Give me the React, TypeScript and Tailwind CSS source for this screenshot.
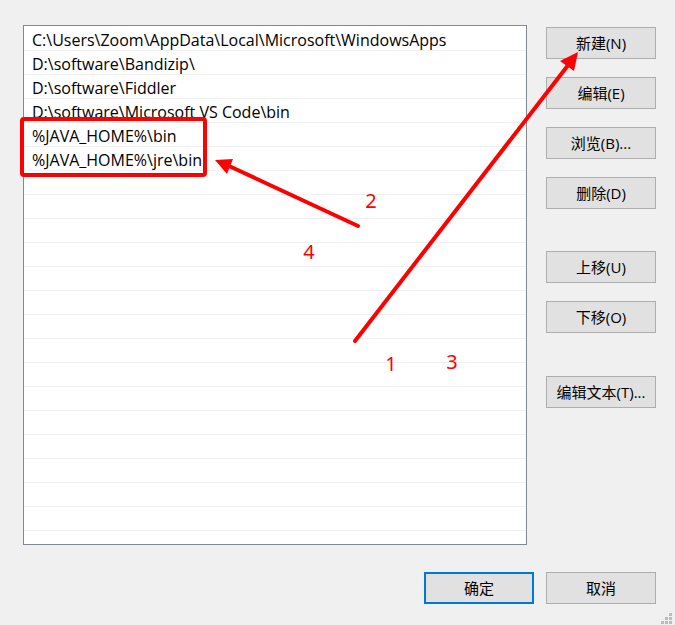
import React from 'react'

const paths = [
  'C:\\Users\\Zoom\\AppData\\Local\\Microsoft\\WindowsApps',
  'D:\\software\\Bandizip\\',
  'D:\\software\\Fiddler',
  'D:\\software\\Microsoft VS Code\\bin',
  '%JAVA_HOME%\\bin',
  '%JAVA_HOME%\\jre\\bin',
]

const font = { fontFamily: '"Open Sans", "Noto Sans CJK SC", sans-serif' }

function Button({ label, primary = false, className = '' }: { label: string; primary?: boolean; className?: string }) {
  return (
    <div
      className={`flex h-[32px] w-[110px] items-center justify-center bg-[#e1e1e1] text-[15px] text-black ${
        primary ? 'border-2 border-[#0078d7]' : 'border border-[#adadad]'
      } ${className}`}
    >
      {label}
    </div>
  )
}

export default function App() {
  const rows = Array.from({ length: 22 }, (_, i) => paths[i] || '')

  return (
    <div className="relative h-[625px] w-[675px] overflow-hidden bg-[#f0f0f0]" style={font}>
      <div className="flex pl-[23px] pt-[25px]">
        {/* 路径列表 */}
        <div className="h-[520px] w-[504px] overflow-hidden border border-[#828790] bg-white pt-[1px]">
          {rows.map((p, i) => (
            <div
              key={i}
              className="flex h-[24px] items-center border-b border-[#f0f0f0] pt-[2px] pl-[8px] text-[16px] leading-none whitespace-nowrap text-black"
            >
              {p}
            </div>
          ))}
        </div>

        {/* 右侧按钮 */}
        <div className="ml-[19px] flex flex-col pt-[2px]">
          <Button label="新建(N)" />
          <Button label="编辑(E)" className="mt-[18px]" />
          <Button label="浏览(B)..." className="mt-[18px]" />
          <Button label="删除(D)" className="mt-[18px]" />
          <Button label="上移(U)" className="mt-[42px]" />
          <Button label="下移(O)" className="mt-[18px]" />
          <Button label="编辑文本(T)..." className="mt-[43px]" />
        </div>
      </div>

      {/* 底部按钮 */}
      <div className="mt-[27px] flex justify-end gap-[12px] pr-[19px]">
        <Button label="确定" primary />
        <Button label="取消" />
      </div>

      {/* 调整大小手柄 */}
      <div className="absolute right-[3px] bottom-[1px] grid grid-cols-3 gap-[1px]">
        <span className="h-[3px] w-[3px]" />
        <span className="h-[3px] w-[3px]" />
        <span className="h-[3px] w-[3px] bg-[#bcbcbc]" />
        <span className="h-[3px] w-[3px]" />
        <span className="h-[3px] w-[3px] bg-[#bcbcbc]" />
        <span className="h-[3px] w-[3px] bg-[#bcbcbc]" />
        <span className="h-[3px] w-[3px] bg-[#bcbcbc]" />
        <span className="h-[3px] w-[3px] bg-[#bcbcbc]" />
        <span className="h-[3px] w-[3px] bg-[#bcbcbc]" />
      </div>

      {/* 标注 */}
      <svg className="pointer-events-none absolute inset-0" width="675" height="625" viewBox="0 0 675 625">
        <rect x="22" y="119" width="183" height="56" rx="2" fill="none" stroke="#ff0000" strokeWidth="4" />
        <line x1="355" y1="341" x2="569" y2="64" stroke="#ff0000" strokeWidth="4" strokeLinecap="round" />
        <polygon points="578,52 560,61 574,71" fill="#ff0000" />
        <line x1="358" y1="226" x2="229" y2="166" stroke="#ff0000" strokeWidth="4" strokeLinecap="round" />
        <polygon points="215,160 233,159 227,174" fill="#ff0000" />
        <g fill="#ff0000" fontSize="20" textAnchor="middle" style={{ fontFamily: '"Noto Sans", sans-serif' }}>
          <text x="371" y="208">2</text>
          <text x="309" y="259">4</text>
          <text x="391" y="371">1</text>
          <text x="452" y="369">3</text>
        </g>
      </svg>
    </div>
  )
}
